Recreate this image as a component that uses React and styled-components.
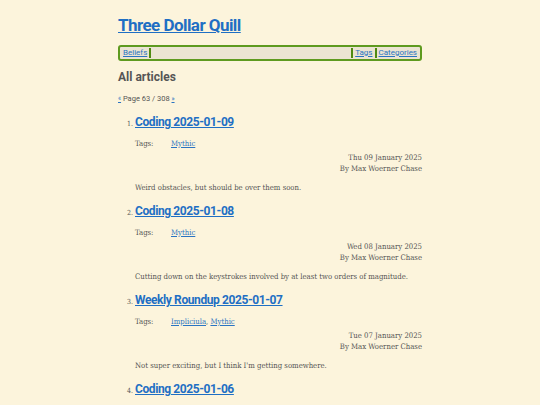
import React from "react";
import styled, { createGlobalStyle } from "styled-components";

const Global = createGlobalStyle`
  html, body { margin: 0; padding: 0; background: #fcf4dc; }
  body { font-family: "DejaVu Serif Condensed", "DejaVu Serif", serif; color: #555; }
  a { color: #2a74c2; }
`;

const Page = styled.div`
  width: 304px;
  margin: 0 auto;
  padding-top: 14px;
`;

const Title = styled.h1`
  margin: 0;
  font-family: "Roboto", "Open Sans", sans-serif;
  font-weight: 700;
  font-size: 17px;
  line-height: 22px;
  letter-spacing: -0.55px;
  a { color: #1f6fc4; }
`;

const Nav = styled.nav`
  margin-top: 9px;
  display: flex;
  align-items: stretch;
  height: 12px;
  border: 2px solid #5e9a1f;
  border-radius: 3px;
  background: #ebe4d2;
  font-family: "Roboto", sans-serif;
  font-size: 8px;
  line-height: 12px;
  padding: 0 2px;
`;

const NavLink = styled.a`
  color: #2a74c2;
  padding: 0 1px;
`;

const Sep = styled.span`
  width: 2px;
  background: #4f8a12;
  margin: 1px 1px;
`;

const Spacer = styled.span`
  flex: 1;
`;

const Heading = styled.h2`
  margin: 8px 0 0;
  font-family: "Roboto", sans-serif;
  font-weight: 700;
  font-size: 12px;
  line-height: 16px;
  color: #555;
`;

const Pager = styled.p`
  margin: 9px 0 0;
  font-family: "Roboto", sans-serif;
  font-size: 7.5px;
  line-height: 10px;
  color: #555;
  a { font-size: 6.5px; }
`;

const List = styled.ol`
  margin: 10px 0 0;
  padding-left: 17px;
  font-size: 7.7px;
  color: #555;
`;

const Item = styled.li`
  margin-bottom: 10px;
  &::marker { font-size: 7px; }
`;

const ItemTitle = styled.h3`
  margin: 0;
  font-family: "Roboto", sans-serif;
  font-weight: 700;
  font-size: 12px;
  line-height: 16px;
  letter-spacing: -0.4px;
  a { color: #1f6fc4; }
`;

const TagRow = styled.div`
  margin-top: 9px;
  display: grid;
  grid-template-columns: 36px 1fr;
  font-size: 7.7px;
  line-height: 10px;
`;

const Byline = styled.div`
  margin-top: 2.5px;
  text-align: right;
  font-size: 7.7px;
  line-height: 11px;
`;

const Summary = styled.p`
  margin: 9.5px 0 0;
  font-size: 7.7px;
  line-height: 10px;
`;

const articles = [
  { title: "Coding 2025-01-09", tags: ["Mythic"], date: "Thu 09 January 2025", summary: "Weird obstacles, but should be over them soon." },
  { title: "Coding 2025-01-08", tags: ["Mythic"], date: "Wed 08 January 2025", summary: "Cutting down on the keystrokes involved by at least two orders of magnitude." },
  { title: "Weekly Roundup 2025-01-07", tags: ["Impliciula", "Mythic"], date: "Tue 07 January 2025", summary: "Not super exciting, but I think I'm getting somewhere." },
  { title: "Coding 2025-01-06", tags: ["Mythic"], date: "Mon 06 January 2025", summary: "" },
];

export default function App() {
  return (
    <>
      <Global />
      <Page>
        <Title><a href="#">Three Dollar Quill</a></Title>
        <Nav>
          <NavLink href="#">Beliefs</NavLink>
          <Sep />
          <Spacer />
          <Sep />
          <NavLink href="#">Tags</NavLink>
          <Sep />
          <NavLink href="#">Categories</NavLink>
        </Nav>
        <Heading>All articles</Heading>
        <Pager><a href="#">«</a> Page 63 / 308 <a href="#">»</a></Pager>
        <List>
          {articles.map((a) => (
            <Item key={a.title}>
              <ItemTitle><a href="#">{a.title}</a></ItemTitle>
              <TagRow>
                <span>Tags:</span>
                <span>
                  {a.tags.map((t, i) => (
                    <React.Fragment key={t}>
                      {i > 0 && ", "}
                      <a href="#">{t}</a>
                    </React.Fragment>
                  ))}
                </span>
              </TagRow>
              <Byline>
                <div>{a.date}</div>
                <div>By Max Woerner Chase</div>
              </Byline>
              <Summary>{a.summary}</Summary>
            </Item>
          ))}
        </List>
      </Page>
    </>
  );
}
